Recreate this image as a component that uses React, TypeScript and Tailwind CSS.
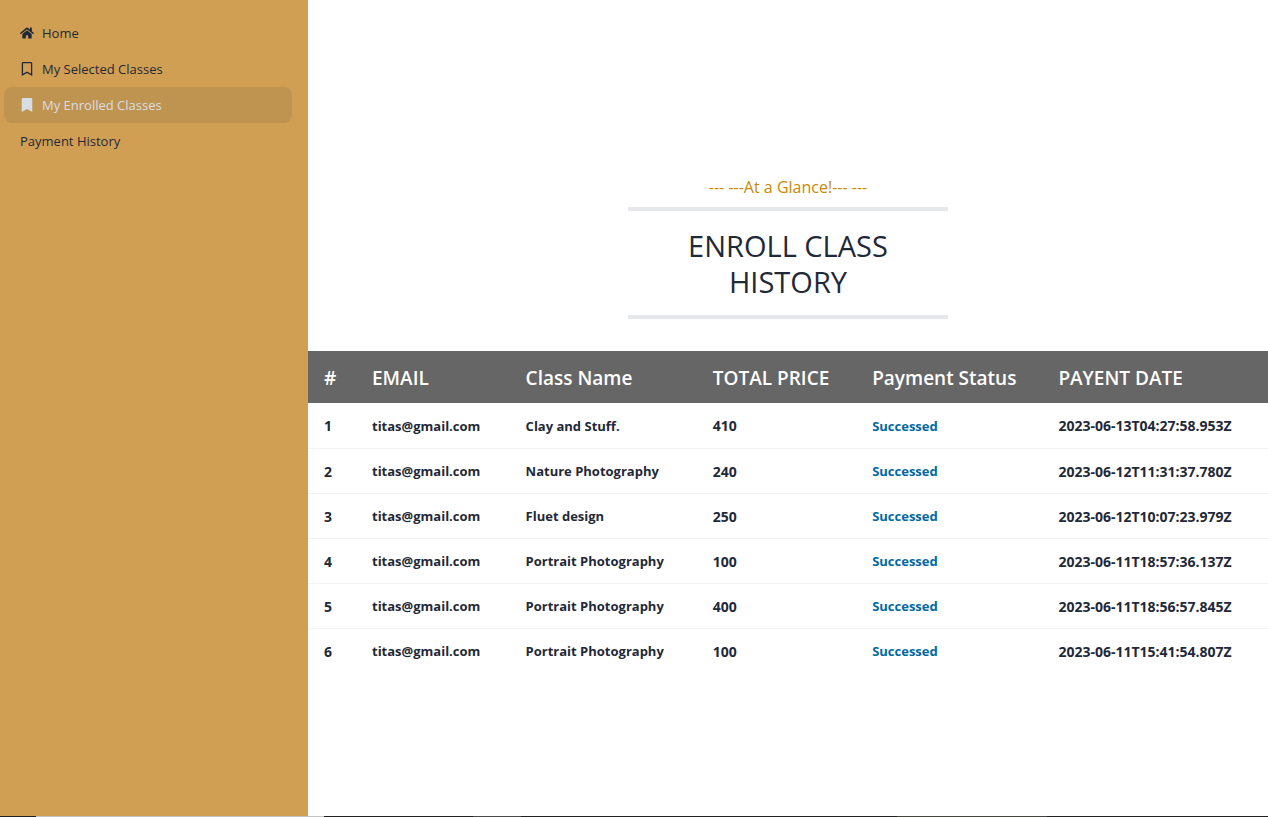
import type { ReactNode } from "react";
import { FaBookmark, FaHome, FaRegBookmark } from "react-icons/fa";

type Enrollment = { name: string; price: number; date: string };

const enrollments: Enrollment[] = [
  { name: "Clay and Stuff.", price: 410, date: "2023-06-13T04:27:58.953Z" },
  { name: "Nature Photography", price: 240, date: "2023-06-12T11:31:37.780Z" },
  { name: "Fluet design", price: 250, date: "2023-06-12T10:07:23.979Z" },
  { name: "Portrait Photography", price: 100, date: "2023-06-11T18:57:36.137Z" },
  { name: "Portrait Photography", price: 400, date: "2023-06-11T18:56:57.845Z" },
  { name: "Portrait Photography", price: 100, date: "2023-06-11T15:41:54.807Z" },
];

function NavItem({ icon, label, active = false }: { icon?: ReactNode; label: string; active?: boolean }) {
  return (
    <li>
      <a
        href="#"
        aria-current={active ? "page" : undefined}
        className={
          active
            ? "flex h-9 items-center gap-2 rounded-lg bg-[#bf9350] px-4 text-[#d7dde4]"
            : "flex h-9 items-center gap-2 rounded-lg px-4"
        }
      >
        {icon}
        <span className="pt-0.5">{label}</span>
      </a>
    </li>
  );
}

function Sidebar() {
  return (
    <aside className="w-[308px] shrink-0 bg-[#d19f54]">
      <nav className="py-[15px] pr-4 pl-1">
        <ul className="text-[13px]">
          <NavItem icon={<FaHome className="size-3.5" />} label="Home" />
          <NavItem icon={<FaRegBookmark className="size-3.5" />} label="My Selected Classes" />
          <NavItem icon={<FaBookmark className="size-3.5" />} label="My Enrolled Classes" active />
          <NavItem label="Payment History" />
        </ul>
      </nav>
    </aside>
  );
}

function SectionTitle() {
  return (
    <header className="mx-auto my-8 w-80 text-center">
      <p className="mb-2 text-base leading-6 text-[#ca8a04]">--- ---At a Glance!--- ---</p>
      <h1 className="border-y-4 border-gray-200 px-8 pt-[17px] pb-[15px] text-[29px] leading-9 text-[#1f2937] uppercase">
        Enroll Class History
      </h1>
    </header>
  );
}

function HistoryTable() {
  return (
    <table className="w-full table-fixed text-left whitespace-nowrap">
      <colgroup>
        <col className="w-[5%]" />
        <col className="w-[16%]" />
        <col className="w-[19.5%]" />
        <col className="w-[16.6%]" />
        <col className="w-[19.4%]" />
        <col />
      </colgroup>
      <thead className="bg-[#666666] text-[19px] text-white">
        <tr className="h-[52px]">
          <th className="px-4 pt-0.5 font-semibold">#</th>
          <th className="px-4 pt-0.5 font-semibold">EMAIL</th>
          <th className="px-4 pt-0.5 font-semibold">Class Name</th>
          <th className="px-4 pt-0.5 font-semibold">TOTAL PRICE</th>
          <th className="px-4 pt-0.5 font-semibold">Payment Status</th>
          <th className="px-4 pt-0.5 font-semibold">PAYENT DATE</th>
        </tr>
      </thead>
      <tbody className="text-[13px] font-bold">
        {enrollments.map((item, index) => (
          <tr key={item.date} className="h-[45px] border-b border-[#f2f2f2] last:border-b-0">
            <th className="px-4 pt-0.5 text-sm font-bold">{index + 1}</th>
            <td className="px-4 pt-0.5">titas@gmail.com</td>
            <td className="px-4 pt-0.5">{item.name}</td>
            <td className="px-4 pt-0.5 text-sm">{item.price}</td>
            <td className="px-4 pt-0.5 text-[#0369a1]">Successed</td>
            <td className="px-4 pt-0.5 text-sm">{item.date}</td>
          </tr>
        ))}
      </tbody>
    </table>
  );
}

export default function App() {
  return (
    <div className="flex min-h-screen flex-col bg-white font-['Open_Sans','Noto_Sans',sans-serif] text-[#1f2937]">
      <div className="flex grow">
        <Sidebar />
        <main className="flex min-w-0 grow flex-col justify-center">
          <SectionTitle />
          <HistoryTable />
        </main>
      </div>
      <div className="flex h-px bg-[#231f20]">
        <div className="w-9" />
        <div className="w-72 bg-[#c3c3c3]" />
        <div className="w-[149px]" />
        <div className="w-12 bg-[#4b494a]" />
        <div className="w-[376px]" />
        <div className="w-[150px] bg-[#45433c]" />
      </div>
    </div>
  );
}
